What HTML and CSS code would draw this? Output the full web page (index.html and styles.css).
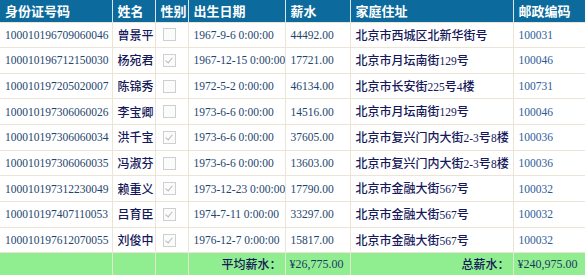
FILE: index.html
```html
<!DOCTYPE html>
<html>
<head>
<meta charset="utf-8">
<link rel="stylesheet" href="styles.css">
</head>
<body>
<table class="grid">
  <colgroup>
    <col class="c1"><col class="c2"><col class="c3"><col class="c4"><col class="c5"><col class="c6"><col class="c7">
  </colgroup>
  <thead>
    <tr><th>身份证号码</th><th>姓名</th><th>性别</th><th>出生日期</th><th>薪水</th><th>家庭住址</th><th>邮政编码</th></tr>
  </thead>
  <tbody>
    <tr><td class="num">100010196709060046</td><td class="cn">曾景平</td><td class="ck"><span class="box"></span></td><td class="num">1967-9-6 0:00:00</td><td class="num">44492.00</td><td class="cn">北京市西城区北新华街号</td><td class="zip">100031</td></tr>
    <tr><td class="num">100010196712150030</td><td class="cn">杨宛君</td><td class="ck"><span class="box on"></span></td><td class="num">1967-12-15 0:00:00</td><td class="num">17721.00</td><td class="cn">北京市月坛南街<span class="d">129</span>号</td><td class="zip">100046</td></tr>
    <tr><td class="num">100010197205020007</td><td class="cn">陈锦秀</td><td class="ck"><span class="box"></span></td><td class="num">1972-5-2 0:00:00</td><td class="num">46134.00</td><td class="cn">北京市长安街<span class="d">225</span>号<span class="d">4</span>楼</td><td class="zip">100731</td></tr>
    <tr><td class="num">100010197306060026</td><td class="cn">李宝卿</td><td class="ck"><span class="box"></span></td><td class="num">1973-6-6 0:00:00</td><td class="num">14516.00</td><td class="cn">北京市月坛南街<span class="d">129</span>号</td><td class="zip">100046</td></tr>
    <tr><td class="num">100010197306060034</td><td class="cn">洪千宝</td><td class="ck"><span class="box on"></span></td><td class="num">1973-6-6 0:00:00</td><td class="num">37605.00</td><td class="cn">北京市复兴门内大街<span class="d">2-3</span>号<span class="d">8</span>楼</td><td class="zip">100036</td></tr>
    <tr><td class="num">100010197306060035</td><td class="cn">冯淑芬</td><td class="ck"><span class="box"></span></td><td class="num">1973-6-6 0:00:00</td><td class="num">13603.00</td><td class="cn">北京市复兴门内大街<span class="d">2-3</span>号<span class="d">8</span>楼</td><td class="zip">100036</td></tr>
    <tr><td class="num">100010197312230049</td><td class="cn">赖重义</td><td class="ck"><span class="box on"></span></td><td class="num">1973-12-23 0:00:00</td><td class="num">17790.00</td><td class="cn">北京市金融大街<span class="d">567</span>号</td><td class="zip">100032</td></tr>
    <tr><td class="num">100010197407110053</td><td class="cn">吕育臣</td><td class="ck"><span class="box on"></span></td><td class="num">1974-7-11 0:00:00</td><td class="num">33297.00</td><td class="cn">北京市金融大街<span class="d">567</span>号</td><td class="zip">100032</td></tr>
    <tr><td class="num">100010197612070055</td><td class="cn">刘俊中</td><td class="ck"><span class="box on"></span></td><td class="num">1976-12-7 0:00:00</td><td class="num">15817.00</td><td class="cn">北京市金融大街<span class="d">567</span>号</td><td class="zip">100032</td></tr>
  </tbody>
  <tfoot>
    <tr><td></td><td></td><td></td><td class="lbl">平均薪水：</td><td class="num">¥26,775.00</td><td class="lbl">总薪水：</td><td class="num">¥240,975.00</td></tr>
  </tfoot>
</table>
</body>
</html>
```

FILE: styles.css
```css
html, body {
  margin: 0;
  padding: 0;
  background: #ffffff;
}
.grid {
  border-collapse: collapse;
  table-layout: fixed;
  width: 586px;
  font-family: "Liberation Serif", serif;
}
.c1 { width: 112px; }
.c2 { width: 43px; }
.c3 { width: 33px; }
.c4 { width: 97px; }
.c5 { width: 65px; }
.c6 { width: 163px; }
.c7 { width: 73px; }

.grid thead tr { height: 22px; }
.grid tbody tr { height: 25.67px; }
.grid tfoot tr { height: 22px; }

.grid th, .grid td {
  line-height: 14px;
  white-space: nowrap;
  overflow: hidden;
  vertical-align: middle;
}

.grid th {
  padding: 0 0 0 5px;
  background: #0d6a9c;
  color: #ffffff;
  text-align: left;
  font-family: "Noto Sans CJK SC", sans-serif;
  font-weight: 700;
  font-size: 13px;
  border-left: 1px solid #d7e6ef;
}
.grid th:first-child { border-left: none; }

.grid tbody td {
  padding: 0 0 0 5px;
  border: 1px solid #ece5d6;
}
.grid td:first-child { border-left: none; }

.num {
  font-size: 11.5px;
  color: #1e456e;
}
.zip {
  font-size: 11.5px;
  color: #2e5c96;
}
.cn {
  font-family: "Noto Sans CJK SC", sans-serif;
  font-size: 12px;
  font-weight: 500;
  color: #15185a;
}
.cn .d {
  font-family: "Liberation Serif", serif;
  font-weight: 400;
  font-size: 11.5px;
}
.grid td.ck { padding-left: 7px; }
.box {
  display: block;
  width: 11px;
  height: 11px;
  border: 1px solid #cfcfcf;
  background: #fbfbfb;
  position: relative;
}
.box.on::after {
  content: "";
  position: absolute;
  left: 3px;
  top: 1px;
  width: 3px;
  height: 6px;
  border-right: 1px solid #b9b9b9;
  border-bottom: 1px solid #b9b9b9;
  transform: rotate(40deg);
}

.grid tfoot td {
  background: #90ee90;
  border-left: 1px solid #dfe9d0;
  padding: 0 0 0 5px;
}
.grid tfoot td:first-child { border-left: none; }
.grid tfoot td.num { font-size: 12px; color: #1b3a62; padding-left: 4px; }
.grid tfoot td.lbl {
  text-align: right;
  padding: 0 3px 0 0;
  font-family: "Noto Sans CJK SC", sans-serif;
  font-size: 12px;
  font-weight: 500;
  color: #15185a;
}
```
